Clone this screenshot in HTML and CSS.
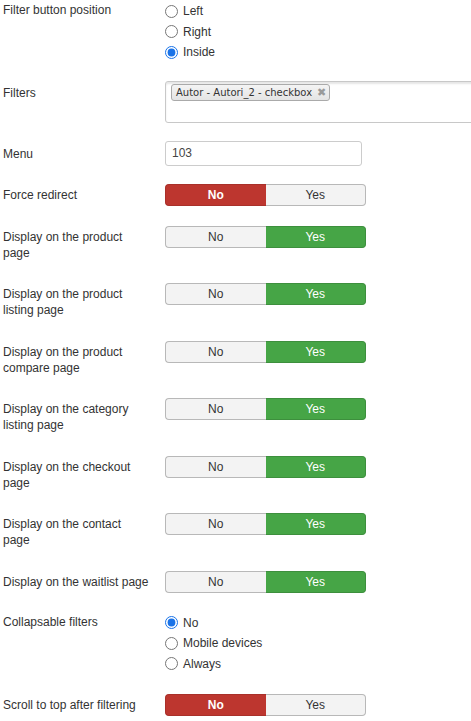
FILE: index.html
```html
<!DOCTYPE html>
<html>
	<head>
		<meta charset="UTF-8">
		<title>Filter options</title>
		<meta name="viewport" content="width=device-width, initial-scale=1.0">
		<link rel="stylesheet" href="styles.css">
	</head>
	<body>
		<form class="options">
			<div class="row tight">
				<div class="label radio-label">Filter button position</div>
				<div class="radios">
					<label><input type="radio" name="btnpos"> Left</label>
					<label><input type="radio" name="btnpos"> Right</label>
					<label><input type="radio" name="btnpos" checked> Inside</label>
				</div>
			</div>
			<div class="row tight">
				<div class="label filters-label">Filters</div>
				<div class="chosen">
					<span class="tag">Autor - Autori_2 - checkbox<span class="tag-x">&#x2716;</span></span>
				</div>
			</div>
			<div class="row tight">
				<div class="label menu-label">Menu</div>
				<input class="text" type="text" value="103">
			</div>
			<div class="row">
				<div class="label">Force redirect</div>
				<div class="toggle"><span class="no on">No</span><span class="yes">Yes</span></div>
			</div>
			<div class="row">
				<div class="label">Display on the product page</div>
				<div class="toggle"><span class="no">No</span><span class="yes on">Yes</span></div>
			</div>
			<div class="row">
				<div class="label">Display on the product listing page</div>
				<div class="toggle"><span class="no">No</span><span class="yes on">Yes</span></div>
			</div>
			<div class="row">
				<div class="label">Display on the product compare page</div>
				<div class="toggle"><span class="no">No</span><span class="yes on">Yes</span></div>
			</div>
			<div class="row">
				<div class="label">Display on the category listing page</div>
				<div class="toggle"><span class="no">No</span><span class="yes on">Yes</span></div>
			</div>
			<div class="row">
				<div class="label">Display on the checkout page</div>
				<div class="toggle"><span class="no">No</span><span class="yes on">Yes</span></div>
			</div>
			<div class="row">
				<div class="label">Display on the contact page</div>
				<div class="toggle"><span class="no">No</span><span class="yes on">Yes</span></div>
			</div>
			<div class="row">
				<div class="label">Display on the waitlist page</div>
				<div class="toggle"><span class="no">No</span><span class="yes on">Yes</span></div>
			</div>
			<div class="row">
				<div class="label radio-label">Collapsable filters</div>
				<div class="radios">
					<label><input type="radio" name="collapse" checked> No</label>
					<label><input type="radio" name="collapse"> Mobile devices</label>
					<label><input type="radio" name="collapse"> Always</label>
				</div>
			</div>
			<div class="row">
				<div class="label">Scroll to top after filtering</div>
				<div class="toggle"><span class="no on">No</span><span class="yes">Yes</span></div>
			</div>
		</form>
	</body>
</html>
```
FILE: styles.css
```css
html, body {
	overflow-x: hidden;
}
body {
	margin: 0;
	padding-top: 1px;
	font-family: "Liberation Sans", Arial, sans-serif;
	font-size: 12px;
	color: #333;
	background: #fff;
}
.row {
	display: grid;
	grid-template-columns: 165px 1fr;
	align-items: start;
	margin-bottom: 20px;
}
.row.tight {
	margin-bottom: 18px;
}
.label {
	padding: 3px 15px 2.5px 3px;
	line-height: 16px;
}
.radio-label {
	padding-top: 1px;
}
.filters-label {
	padding-top: 4px;
}
.menu-label {
	padding-top: 5px;
}
.radios label {
	display: flex;
	align-items: center;
	height: 20.5px;
	gap: 5px;
}
.radios input {
	margin: 0;
	width: 13px;
	height: 13px;
	accent-color: #1a73e8;
}
.chosen {
	width: 320px;
	height: 42px;
	box-sizing: border-box;
	border: 1px solid #c8c8c8;
	border-radius: 3px;
	box-shadow: inset 0 2px 2px #e6e6e6;
	padding: 2px 5px;
}
.tag {
	display: inline-flex;
	align-items: center;
	height: 17px;
	box-sizing: border-box;
	padding: 0 3px 0 4px;
	border: 1px solid #aaa;
	border-radius: 3px;
	background: linear-gradient(#f4f4f4, #e4e4e4);
	font-family: "DejaVu Sans", Verdana, sans-serif;
	font-size: 10px;
	color: #333;
}
.tag-x {
	margin-left: 5px;
	font-size: 11px;
	line-height: 1;
	color: #9a9a9a;
}
.text {
	width: 197px;
	height: 25px;
	box-sizing: border-box;
	margin: 0;
	padding: 0 6px;
	border: 1px solid #ccc;
	border-radius: 3px;
	font-family: "Liberation Sans", Arial, sans-serif;
	font-size: 12px;
	color: #444;
}
.toggle {
	display: flex;
	width: 201px;
	height: 22px;
}
.toggle span {
	flex: 1;
	display: flex;
	align-items: center;
	justify-content: center;
	box-sizing: border-box;
	border: 1px solid #b8b8b8;
	background: #f3f3f3;
	color: #333;
}
.toggle .no {
	border-radius: 4px 0 0 4px;
	border-right: 0;
}
.toggle .yes {
	border-radius: 0 4px 4px 0;
	border-left: 0;
}
.toggle .no.on {
	background: #bd362f;
	border-color: #a9302a;
	color: #fff;
	font-weight: bold;
}
.toggle .yes.on {
	background: #46a546;
	border-color: #3d8f3d;
	color: #fff;
}
```
